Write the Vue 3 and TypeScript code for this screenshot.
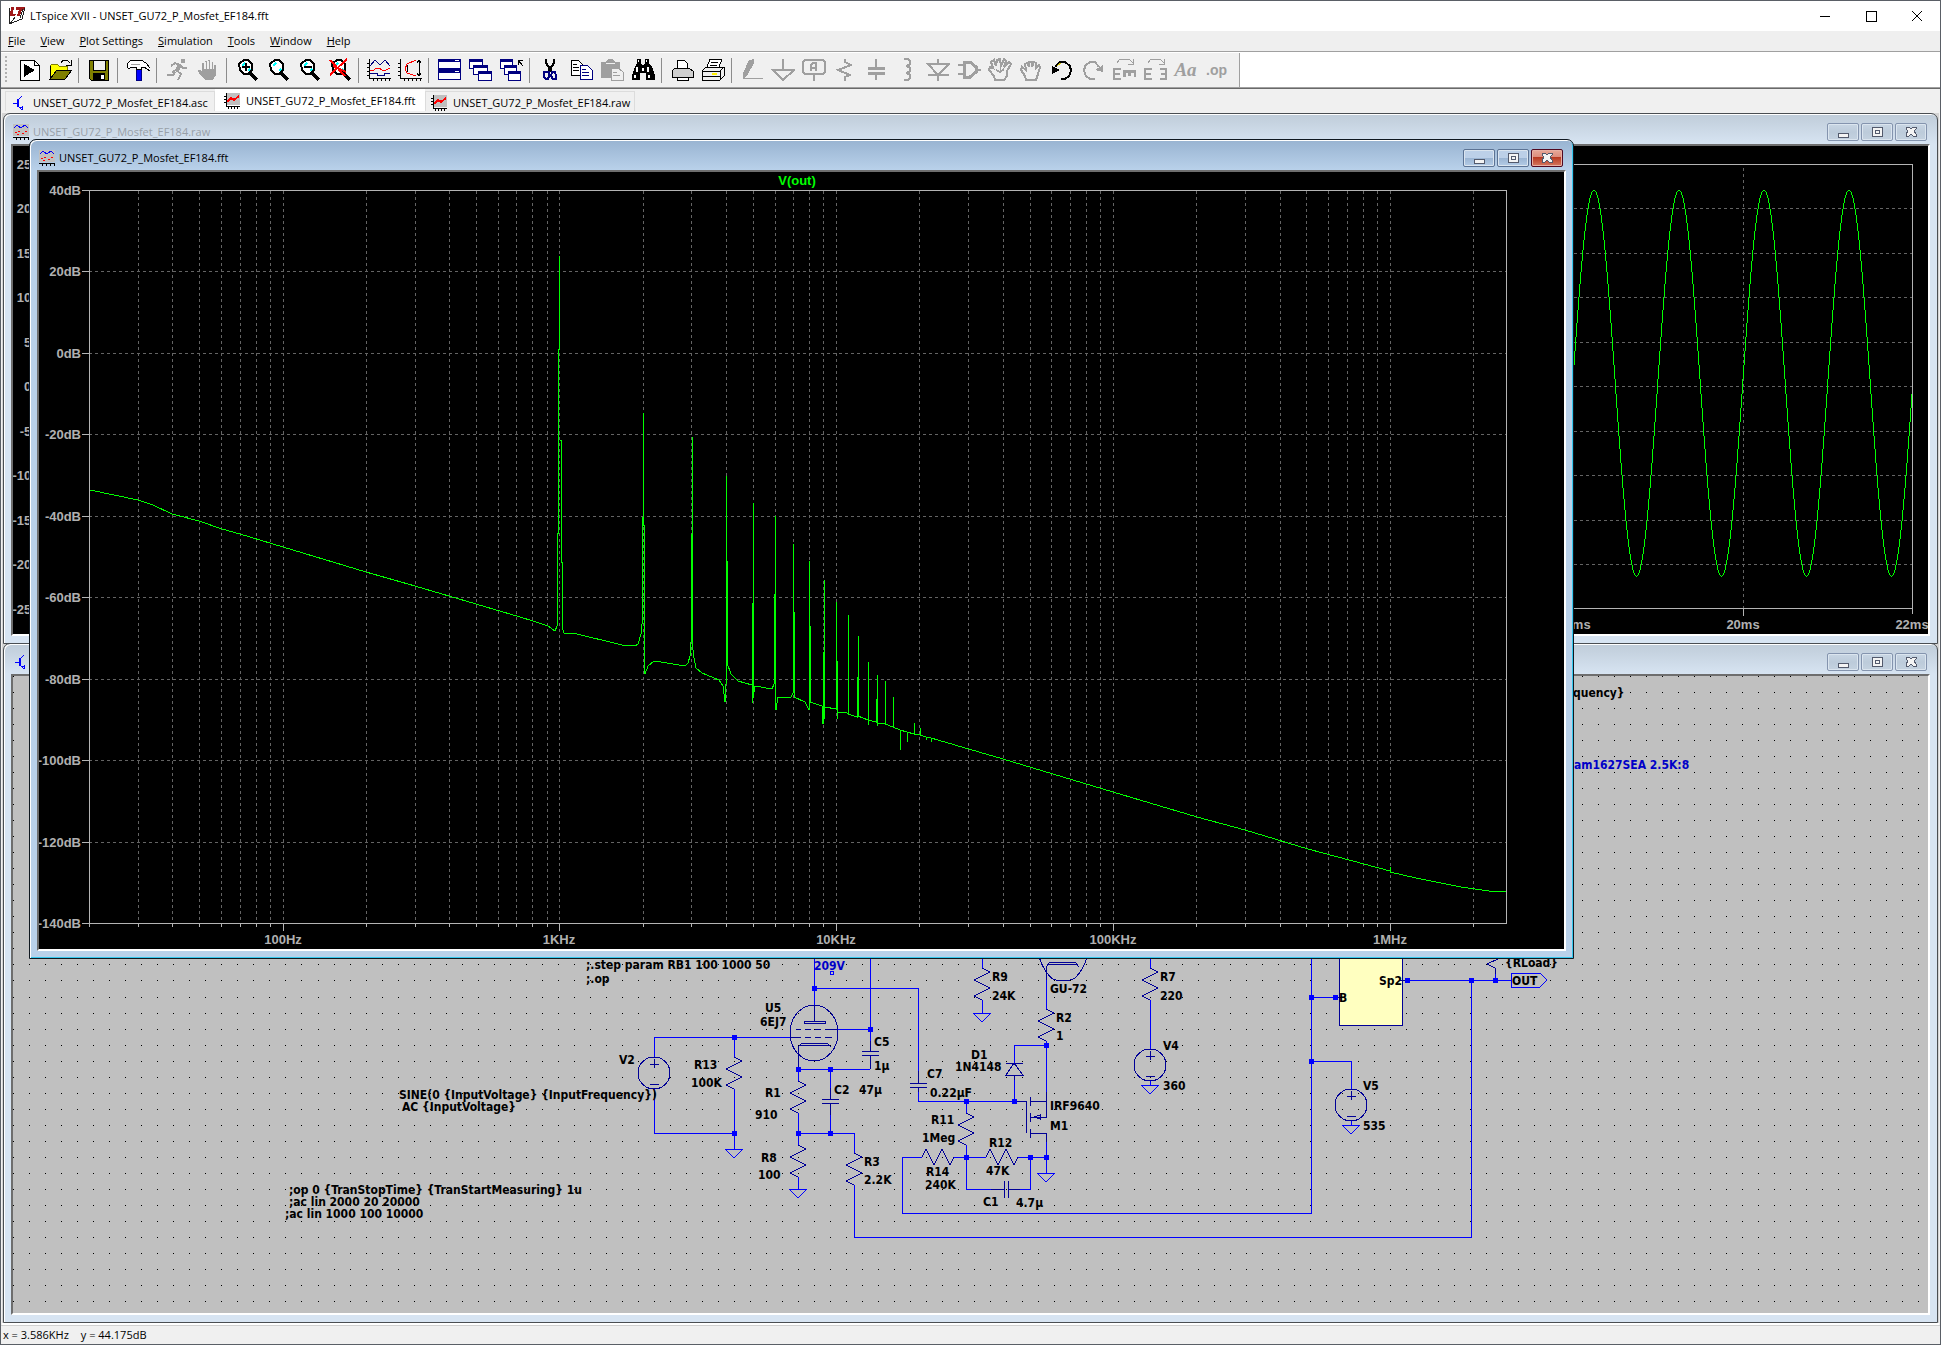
<script setup lang="ts">
type Pt = [number, number]
interface Shape { d: string; f?: string; s?: string; w?: number }
interface Tool { name: string; shapes: Shape[]; text?: string; serif?: boolean; off?: boolean }

const K = '#000000'
const G = '#9f9f9f'
const N = '#000080'
const GLASS: Shape[] = [
  { d: 'M15 15L22 22', s: K, w: 4 },
  { d: 'M9 2H13L17 6V12L13 16H9L5 12L4 6Z', f: '#ffffff', s: K, w: 2 },
  { d: 'M7 8L10 5M13 13L15 11', s: '#00ffff', w: 2 },
]

const groups: Tool[][] = [
  [
    { name: 'Run', shapes: [
      { d: 'M3 2H17L22 7V22H3Z', f: '#ffffff', s: K, w: 1 }, { d: 'M17 2V7H22', s: K }, { d: 'M7 6V19L18 12Z', f: K }] },
    { name: 'Open', shapes: [
      { d: 'M2 20V8L4 6H9L11 8H19V12H9L3 21Z', f: '#ffff00', s: '#808000' },
      { d: 'M9 12H24L17 21H2Z', f: '#808000', s: K }, { d: 'M2 8V21', s: K },
      { d: 'M13 5L15 2H19L22 5M23 2V7H18', s: K }] },
  ],
  [{ name: 'Save', shapes: [
    { d: 'M2 2H21V22H4L2 20Z', f: '#808000', s: K }, { d: 'M6 2H18V12H6Z', f: '#efefef', s: K },
    { d: 'M6 15H18V22H6Z', f: K }, { d: 'M14 17H17V21H14Z', f: '#ffffff' }] }],
  [{ name: 'Control Panel', shapes: [
    { d: 'M10 10H15V22H10Z', f: '#0000ff', s: N },
    { d: 'M1 6L5 2H15L20 5L24 10V13L18 9H15V11H10V9H5L3 11L1 9Z', f: '#ffffff', s: K },
    { d: 'M5 6H14', s: '#a0a0a0' }] }],
  [
    { name: 'Run simulation', off: true, shapes: [
      { d: 'M16 1H20V5H16Z', f: G }, { d: 'M15 6L11 12L7 14M6 8L10 5L15 7L18 10H22M11 12L16 16L13 22M10 14L8 17H2', s: G, w: 2 },
      { d: 'M13 6L17 8L13 14L10 12Z', f: G }] },
    { name: 'Halt', off: true, shapes: [
      { d: 'M6 12V5H8V11H9V3H11V11H12V2H14V11H15V4H17V11H18V7H20V17L17 22H9L3 15L2 12H4L6 14Z', f: G },
      { d: 'M9 4V11M12 3V11M15 4V11', s: '#efefef' }] },
  ],
  [
    { name: 'Zoom in', shapes: [...GLASS, { d: 'M7 9H15M11 5V13', s: K, w: 2 }] },
    { name: 'Zoom back', shapes: GLASS },
    { name: 'Zoom out', shapes: [...GLASS, { d: 'M7 9H15', s: K, w: 2 }] },
    { name: 'Zoom full extents', shapes: [...GLASS, { d: 'M2 2L17 18M19 1L2 17M5 8L18 14', s: '#ff0000', w: 2 }] },
  ],
  [
    { name: 'Autorange', shapes: [
      { d: 'M2 1V20H24M2 5H0M2 9H0M2 13H0M2 17H0M6 20V23M10 20V23M14 20V23M18 20V23M22 20V23', s: K },
      { d: 'M3 8L8 2L13 7L18 2L23 8', s: N }, { d: 'M3 12H7L9 10H12L15 12H19L23 10', s: '#ff0000' },
      { d: 'M3 15H10V17H17V15H23', s: N }] },
    { name: 'Y range', shapes: [
      { d: 'M2 1V20H24M2 5H0M2 9H0M2 13H0M2 17H0M6 20V23M10 20V23M14 20V23M18 20V23M22 20V23', s: K },
      { d: 'M18 2L9 6L7 11L9 15L18 18', s: '#ff0000', w: 1 }, { d: 'M21 2V18M19 5L21 2L23 5M19 15L21 18L23 15M9 7V14', s: K }] },
  ],
  [
    { name: 'Tile', shapes: [
      { d: 'M1 1H24V22H1Z', f: N }, { d: 'M2 4H23V10H2Z', f: '#ffffff' }, { d: 'M2 15H23V21H2Z', f: '#ffffff' },
      { d: 'M18 2H22', s: '#ffffff' }, { d: 'M18 13H22', s: '#ffffff' }] },
    { name: 'Cascade', shapes: [
      { d: 'M1 1H15V11H1Z', f: N }, { d: 'M2 4H14V10H2Z', f: '#ffffff' },
      { d: 'M5 7H20V17H5Z', f: N }, { d: 'M6 10H19V16H6Z', f: '#ffffff' },
      { d: 'M10 13H24V23H10Z', f: N }, { d: 'M11 16H23V22H11Z', f: '#ffffff' }] },
    { name: 'Close all', shapes: [
      { d: 'M1 1H14V11H1Z', f: N }, { d: 'M2 4H13V10H2Z', f: '#ffffff' },
      { d: 'M5 7H18V17H5Z', f: N }, { d: 'M6 10H17V16H6Z', f: '#ffffff' },
      { d: 'M9 13H22V23H9Z', f: N }, { d: 'M10 16H21V22H10Z', f: '#ffffff' },
      { d: 'M19 7V2H24M19 2L24 8', s: K }] },
  ],
  [
    { name: 'Cut', shapes: [
      { d: 'M8 1V5L14 14M16 1V5L10 14', s: K, w: 2 },
      { d: 'M9 14H6V19L8 21H10L11 18V14ZM14 14H17L18 18V21H15L13 18Z', s: N, w: 2 }] },
    { name: 'Copy', shapes: [
      { d: 'M2 2H9L13 6V17H2Z', f: '#ffffff', s: K }, { d: 'M4 6H8M4 9H10M4 12H10', s: K },
      { d: 'M11 7H18L23 12V21H11Z', f: '#ffffff', s: N }, { d: 'M13 11H17M13 14H20M13 17H20', s: N }] },
    { name: 'Paste', off: true, shapes: [
      { d: 'M1 4H6L8 1H13L15 4H20V20H1Z', f: G }, { d: 'M6 5H15', s: '#efefef' },
      { d: 'M11 10H18L23 14V22H11Z', f: '#efefef', s: G }, { d: 'M13 14H17M13 17H20', s: G }] },
    { name: 'Find', shapes: [
      { d: 'M6 1H10V5L12 8L14 5V1H18V5L21 9L24 17V22H15V15H9V22H1V17L4 9L6 5Z', f: K },
      { d: 'M7 3H8M15 3H16M6 9V14M12 10V13M17 9V14M4 17V20M18 17V20', s: '#ffffff', w: 2 }] },
  ],
  [
    { name: 'Print setup', shapes: [
      { d: 'M7 10V2H14L17 5V10', f: '#ffffff', s: K }, { d: 'M5 10H19L23 13V19H2V13Z', f: '#d0d0d0', s: K },
      { d: 'M7 19H18V22H7Z', f: '#ffffff', s: K }] },
    { name: 'Print', shapes: [
      { d: 'M6 9L9 1H21L18 9', f: '#ffffff', s: K }, { d: 'M10 4H17M9 7H16', s: K },
      { d: 'M1 13L5 9H23V18L19 22H1Z', f: '#efefef', s: K }, { d: 'M1 13H19V22M19 13L23 9M1 18H19', s: K },
      { d: 'M11 16H16', s: '#ffee00', w: 2 }] },
  ],
  [
    { name: 'Wire', off: true, shapes: [{ d: 'M9 2L14 1V5L8 16L3 21V15Z', f: G }, { d: 'M3 20H23', s: G }] },
    { name: 'Ground', off: true, shapes: [{ d: 'M12 1V12M2 12H23L12 22Z', s: G, w: 2 }] },
    { name: 'Label net', off: true, shapes: [{ d: 'M3 2H21L23 4V14L21 16H3L1 14V4ZM12 16V23M9 13V7L11 5H14V13M9 10H14', s: G, w: 2 }] },
    { name: 'Resistor', off: true, shapes: [{ d: 'M12 1V4L18 7L5 12L17 17L12 19V23', s: G, w: 2 }] },
    { name: 'Capacitor', off: true, shapes: [{ d: 'M12 1V10M12 14V22', s: G, w: 2 }, { d: 'M4 10H21M4 15H21', s: G, w: 3 }] },
    { name: 'Inductor', off: true, shapes: [{ d: 'M9 1H13L15 3V6L12 8L15 10V13L12 15L15 17V20L13 22H9', s: G, w: 2 }] },
    { name: 'Diode', off: true, shapes: [{ d: 'M12 1V6M2 6H23L12 17ZM2 17H23M12 17V23', s: G, w: 2 }] },
    { name: 'Component', off: true, shapes: [{ d: 'M1 7H6M1 16H6M19 12H24', s: G, w: 2 }, { d: 'M7 4H13L19 9V14L13 19H7Z', s: G, w: 3 }] },
    { name: 'Move', off: true, shapes: [{ d: 'M7 22L6 18L1 12L2 9L5 10L3 4L6 2L8 8L9 2L12 1L13 8L16 1L18 3L16 9L21 4L23 6L19 13V18L16 22ZM8 12L12 14L16 11', s: G, w: 2 }] },
    { name: 'Drag', off: true, shapes: [{ d: 'M7 22L6 18L2 12L3 9L7 12L6 6L8 5L10 9V4H13V9L15 4L17 5V10L20 7L21 9L19 16L17 22Z', s: G, w: 2 }] },
    { name: 'Undo', shapes: [{ d: 'M5 9L10 4H15L20 8L21 13L19 18L15 21H11', s: K, w: 2 }, { d: 'M7 8L11 5', s: '#d0c000' }, { d: 'M2 8V16L10 12Z', f: K }] },
    { name: 'Redo', off: true, shapes: [{ d: 'M18 9L14 4H9L4 8L3 13L5 18L9 21H14', s: G, w: 2 }, { d: 'M22 7V14L14 12Z', f: G }] },
    { name: 'Rotate', off: true, shapes: [{ d: 'M5 5L8 1H17L21 5M21 1V6H16', s: G, w: 1 }, { d: 'M9 11H2V21H9M2 16H8', s: G, w: 2 }, { d: 'M12 19V13H23V19M17 13V18', s: G, w: 3 }] },
    { name: 'Mirror', off: true, shapes: [{ d: 'M5 5L8 1H17L21 5M21 1V6H16', s: G, w: 1 }, { d: 'M9 11H2V21H9M2 16H8M17 11H23V21H17M18 16H23', s: G, w: 2 }] },
    { name: 'Text', off: true, shapes: [], text: 'Aa', serif: true },
    { name: 'SPICE directive', off: true, shapes: [], text: '.op' },
  ],
]

const menus = ['File', 'View', 'Plot Settings', 'Simulation', 'Tools', 'Window', 'Help']
const tabs = [
  { name: 'UNSET_GU72_P_Mosfet_EF184.asc', kind: 'asc' },
  { name: 'UNSET_GU72_P_Mosfet_EF184.fft', kind: 'plot' },
  { name: 'UNSET_GU72_P_Mosfet_EF184.raw', kind: 'plot' },
]

/* FFT plot: 20 Hz to 2.6 MHz on a log axis, 40 dB to -140 dB */
const freqX = (f: number) => Math.floor(283 + 276.8 * (Math.log10(f) - 2))
const dbY = (db: number) => Math.round(190 + (40 - db) * 733 / 180)
const dbs = [40, 20, 0, -20, -40, -60, -80, -100, -120, -140]
const minor: number[] = []
for (let dec = 10; dec <= 1e6; dec *= 10)
  for (let k = 1; k < 10; k++) {
    const f = k * dec
    if (f > 20 && f < 2.6e6) minor.push(f)
  }
const decades = [
  { f: 100, t: '100Hz' }, { f: 1e3, t: '1KHz' }, { f: 1e4, t: '10KHz' }, { f: 1e5, t: '100KHz' }, { f: 1e6, t: '1MHz' },
]
const trace: Pt[] = [
  [90, 490], [138, 500], [153, 505], [172, 514], [199, 521], [222, 529], [240, 534], [283, 547], [366, 572], [415, 586],
  [520, 617], [533, 621], [548, 626], [555, 631], [557, 626], [557, 533], [558, 533], [558, 349], [559, 349], [559, 256],
  [560, 318], [560, 440], [561, 440], [561, 562], [562, 562], [562, 626], [564, 633], [573, 633], [622, 645], [635, 646],
  [638, 644], [641, 634], [642, 624], [642, 517], [643, 517], [643, 413], [643, 525], [644, 525], [644, 654], [645, 674],
  [648, 666], [654, 661], [667, 663], [685, 666], [688, 663], [690, 656], [691, 642], [691, 534], [692, 534], [692, 437],
  [692, 642], [694, 658], [696, 668], [702, 673], [719, 680], [723, 686], [725, 702], [726, 684], [726, 476], [726, 561],
  [727, 561], [727, 663], [731, 674], [738, 681], [752, 685], [752, 703], [752, 603], [753, 603], [753, 503], [753, 698],
  [755, 686], [772, 689], [774, 684], [774, 594], [775, 594], [775, 516], [775, 702], [776, 710], [778, 697], [791, 697],
  [793, 693], [793, 544], [793, 612], [794, 612], [794, 697], [805, 702], [809, 710], [809, 561], [809, 626], [810, 626],
  [810, 702], [822, 706], [823, 724], [823, 652], [824, 652], [824, 580], [824, 719], [825, 707], [836, 709], [836, 602],
  [836, 661], [837, 661], [837, 719], [838, 712], [847, 713], [848, 714], [848, 615], [848, 714], [857, 717], [857, 677],
  [858, 677], [858, 636], [858, 716], [868, 720], [868, 662], [868, 725], [868, 720], [876, 722], [876, 699], [877, 699],
  [877, 675], [877, 726], [877, 723], [885, 724], [885, 681], [885, 724], [893, 727], [893, 697], [893, 727], [900, 730],
  [900, 750], [900, 730], [907, 732], [907, 742], [907, 732], [914, 734], [914, 723], [914, 734], [920, 735], [920, 728],
  [920, 735], [926, 737], [926, 740], [926, 737], [931, 738], [931, 742], [931, 738], [1003, 759], [1113, 792],
  [1197, 817], [1245, 830], [1308, 849], [1364, 864], [1390, 871], [1390, 867], [1390, 872], [1416, 878], [1461, 887],
  [1489, 891], [1506, 891],
]
const tracePts = trace.map(p => p.join(',')).join(' ')

/* Transient plot: 1 kHz sine, one period every 85 px */
const volts = [25, 20, 15, 10, 5, 0, -5, -10, -15, -20, -25]
const voltY = (v: number) => Math.round(386 - v * 89 / 10)
const sine: string[] = []
for (let x = 1500; x <= 1912; x++) sine.push(`${x},${Math.round(383 - 193 * Math.cos((x - 1594) * 2 * Math.PI / 85))}`)
const sinePts = sine.join(' ')

/* Schematic */
const dotRows: number[] = []
for (let i = 0; i < 40; i++) dotRows.push(676 + i * 16 + (i > 19 ? 1 : 0))

const resV: Pt[] = [[734, 1057], [798, 1081], [798, 1145], [854, 1153], [982, 968], [966, 1113], [1046, 1009], [1150, 968]]
const resH: Pt[] = [[922, 1157], [986, 1157]]
const grounds: Pt[] = [[734, 1149], [798, 1189], [982, 1013], [1046, 1173], [1150, 1085], [1351, 1125]]
const sources: Pt[] = [[654, 1073], [1150, 1065], [1351, 1105]]
const nodes: Pt[] = [
  [734, 1037], [734, 1133], [814, 988], [870, 1029], [798, 1069], [830, 1069], [798, 1133], [830, 1133], [966, 1101],
  [1014, 1101], [966, 1157], [1030, 1157], [1046, 1157], [1046, 1045], [1311, 997], [1335, 997], [1311, 1061],
  [1407, 980], [1471, 980], [1495, 980],
]
const wires = [
  'M654 1057V1037H790', 'M734 1037V1057M734 1089V1149', 'M654 1089V1133H734', 'M814 958V1005', 'M814 988H918V1071',
  'M870 958V1041M838 1029H870', 'M798 1069H870M798 1069V1081M798 1113V1145M798 1177V1189', 'M830 1069V1088M830 1115V1133',
  'M798 1133H854V1153M854 1185V1237H1471V980', 'M918 1092V1101H1014', 'M966 1101V1113M966 1145V1189H991M1020 1189H1030V1157',
  'M922 1157H902V1213H1311V958', 'M954 1157H986M1018 1157H1046', 'M1014 1063V1045H1046M1014 1080V1101',
  'M1046 980V1009M1046 1041V1092M1046 1142V1173', 'M982 958V968M982 1000V1013', 'M1150 958V968M1150 1000V1049',
  'M1311 1061H1351V1089M1311 997H1335M1407 980H1511M1495 980V974', 'M1511 973H1540L1547 980L1540 987H1511Z',
]
const parts = [
  'M814 1005V1021M804 1021H825V1023H804Z', 'M790 1037H801M805 1037H811M815 1037H821M825 1037H832',
  'M796 1029H801M805 1029H811M815 1029H821M825 1029H838', 'M798 1069V1047L802 1043H827L831 1047M800 1045H829',
  'M870 1041V1051M862 1051H879M862 1055H879M870 1055V1069', 'M830 1088V1099M822 1099H839M822 1103H839M830 1103V1115',
  'M918 1071V1083M910 1083H927M910 1087H927M918 1087V1092', 'M991 1189H1004M1004 1181V1198M1008 1181V1198M1008 1189H1020',
  'M1006 1063H1023M1014 1063L1006 1075H1023ZM1014 1075V1080',
  'M1014 1101H1026V1133M1030 1097V1106M1030 1113V1122M1030 1129V1138M1030 1101H1046M1046 1092V1117H1030M1030 1133H1046V1142',
  'M1034 1117L1040 1115V1119Z', 'M1039 955C1040 964 1050 980 1056 980H1070C1076 980 1086 966 1087 955',
  'M1046 980V967L1050 962H1075L1079 967M1048 964H1077', 'M1495 974V968L1487 964L1498 959',
  'M1335 997H1343M1399 980H1407',
]
const labels: [number, number, string][] = [
  [586, 969, ';.step param RB1 100 1000 50'], [586, 983, ';.op'], [765, 1012, 'U5'], [760, 1026, '6EJ7'],
  [874, 1046, 'C5'], [874, 1070, '1µ'], [619, 1064, 'V2'], [694, 1069, 'R13'], [691, 1087, '100K'], [765, 1097, 'R1'],
  [755, 1119, '910'], [834, 1094, 'C2'], [859, 1094, '47µ'], [927, 1078, 'C7'], [930, 1097, '0.22µF'],
  [931, 1124, 'R11'], [922, 1142, '1Meg'], [989, 1147, 'R12'], [986, 1175, '47K'], [926, 1176, 'R14'],
  [925, 1189, '240K'], [983, 1206, 'C1'], [1016, 1207, '4.7µ'], [761, 1162, 'R8'], [758, 1179, '100'],
  [864, 1166, 'R3'], [864, 1184, '2.2K'], [971, 1059, 'D1'], [955, 1071, '1N4148'], [992, 981, 'R9'], [992, 1000, '24K'],
  [1050, 993, 'GU-72'], [1056, 1022, 'R2'], [1056, 1040, '1'], [1160, 981, 'R7'], [1160, 1000, '220'],
  [1163, 1050, 'V4'], [1163, 1090, '360'], [1050, 1110, 'IRF9640'], [1050, 1130, 'M1'], [1363, 1090, 'V5'],
  [1363, 1130, '535'], [1505, 967, '{RLoad}'], [1512, 985, 'OUT'], [1339, 1002, 'B'], [1379, 985, 'Sp2'],
  [1573, 697, 'quency}'], [399, 1099, 'SINE(0 {InputVoltage} {InputFrequency})'], [402, 1111, 'AC {InputVoltage}'],
  [289, 1194, ';op 0 {TranStopTime} {TranStartMeasuring} 1u'], [289, 1206, ';ac lin 2000 20 20000'],
  [285, 1218, ';ac lin 1000 100 10000'],
]

const windows = [
  { id: 'raw', title: 'UNSET_GU72_P_Mosfet_EF184.raw' },
  { id: 'asc', title: '' },
  { id: 'fft', title: 'UNSET_GU72_P_Mosfet_EF184.fft' },
]
</script>

<template>
  <div class="app">
    <header class="titlebar">
      <svg class="logo" width="18" height="20" viewBox="0 0 18 20" aria-hidden="true">
        <path d="M1 2V18L14 13L17 1" fill="none" stroke="#222" />
        <path d="M3 1H6L5 8H8L7 10H2Z" fill="#a01818" />
        <path d="M8 1H17L16 4H14L12 10H9L11 4H8Z" fill="#a01818" />
        <path d="M2 18L7 11M12 12L15 3" stroke="#222" fill="none" />
      </svg>
      <span class="apptitle">LTspice XVII - UNSET_GU72_P_Mosfet_EF184.fft</span>
      <button class="sys" aria-label="Minimize"><svg width="10" height="10"><path d="M0 5H10" /></svg></button>
      <button class="sys" aria-label="Maximize"><svg width="10" height="10"><path d="M0 0H10V10H0Z" /></svg></button>
      <button class="sys" aria-label="Close"><svg width="10" height="10"><path d="M0 0L10 10M10 0L0 10" /></svg></button>
    </header>

    <nav class="menubar">
      <button v-for="m in menus" :key="m"><u>{{ m[0] }}</u>{{ m.slice(1) }}</button>
    </nav>

    <div class="toolrow">
      <div class="toolbar" role="toolbar">
        <i class="grip"></i>
        <template v-for="(g, gi) in groups" :key="gi">
          <i v-if="gi" class="sep"></i>
          <button v-for="t in g" :key="t.name" class="tool" :aria-label="t.name" :disabled="t.off">
            <span v-if="t.text" :class="['glyph', { serif: t.serif }]">{{ t.text }}</span>
            <svg v-else width="24" height="24" viewBox="0 0 24 24">
              <path v-for="(p, i) in t.shapes" :key="i" :d="p.d" :fill="p.f || 'none'" :stroke="p.s || 'none'" :stroke-width="p.w || 1" />
            </svg>
          </button>
        </template>
      </div>
    </div>

    <div class="tabs" role="tablist">
      <button v-for="(t, i) in tabs" :key="t.name" role="tab" :class="['tab', { active: i === 1 }]">
        <svg v-if="t.kind === 'asc'" width="16" height="16" viewBox="0 0 16 16">
          <path d="M2 8H6M6 4V12M6 6L11 1M6 10L11 15" stroke="#0000ff" fill="none" />
          <path d="M7 4V12M8 13L11 12V15" stroke="#0000ff" fill="none" />
        </svg>
        <svg v-else width="16" height="16" viewBox="0 0 16 16">
          <path d="M2 0H16V12H2Z" fill="#c0c0c0" />
          <path d="M2 0V13H16M0 3H2M0 6H2M0 9H2M4 13V16M7 13V16M10 13V16M13 13V16" stroke="#000" fill="none" />
          <path d="M3 9L7 5L10 7L15 3" stroke="#ff0000" fill="none" stroke-width="2" />
        </svg>
        <span>{{ t.name }}</span>
      </button>
    </div>

    <main class="mdi">
      <section v-for="w in windows" :key="w.id" :class="['win', w.id]">
        <div class="wtitle">
          <svg v-if="w.id === 'asc'" width="16" height="16" viewBox="0 0 16 16">
            <path d="M2 8H6M6 4V12M6 6L11 1M6 10L11 15M7 4V12M8 13L11 12V15" stroke="#0000ff" fill="none" />
          </svg>
          <svg v-else width="16" height="16" viewBox="0 0 16 16">
            <path d="M0 0H16V12H0Z" fill="#c0c0c0" />
            <path d="M1 4L4 1L8 4L12 1L15 4" stroke="#0000ff" fill="none" />
            <path d="M2 8H4M5 7H7M9 9H11M12 7H14M4 10H6" stroke="#ff0000" fill="none" />
            <path d="M0 13H16M3 13V16M7 13V16M11 13V16M15 13V16" stroke="#000" fill="none" />
          </svg>
          <span class="wname">{{ w.title }}</span>
          <button class="wbtn" aria-label="Minimize"><svg width="12" height="12"><path d="M1 7H11V11H1Z" /></svg></button>
          <button class="wbtn" aria-label="Maximize"><svg width="12" height="12"><path d="M1 1H11V10H1Z" /><path d="M4 4H8V7H4Z" /></svg></button>
          <button class="wbtn close" aria-label="Close">
            <svg width="12" height="12"><path d="M1 1H4L6 3L8 1H11V3L9 5L11 8V10H8L6 8L4 10H1V8L3 5L1 3Z" /></svg>
          </button>
        </div>

        <div class="client">
          <svg v-if="w.id === 'raw'" class="canvas">
            <g transform="translate(-13 -146)">
              <path v-for="v in volts.slice(1, -1)" :key="v" :d="`M1550 ${voltY(v)}H1912`" class="grid" />
              <path d="M1743 168V608" class="grid" />
              <path d="M60 164H1912V614M60 608H1912M1743 608V616" class="axis" />
              <polyline :points="sinePts" class="trace" />
              <text v-for="v in volts" :key="'t' + v" x="40" :y="voltY(v) + 5" class="tick end">{{ v }}V</text>
              <text x="1574" y="629" class="tick mid">18ms</text>
              <text x="1743" y="629" class="tick mid">20ms</text>
              <text x="1912" y="629" class="tick mid">22ms</text>
            </g>
          </svg>

          <svg v-else-if="w.id === 'fft'" class="canvas">
            <g transform="translate(-39 -172)">
              <path v-for="d in dbs.slice(1, -1)" :key="d" :d="`M89 ${dbY(d)}H1506`" class="grid" />
              <path v-for="f in minor" :key="f" :d="`M${freqX(f)} 191V923`" class="grid" />
              <path v-for="f in minor" :key="'k' + f" :d="`M${freqX(f)} 923v4`" class="axis" />
              <path v-for="d in decades" :key="'d' + d.f" :d="`M${freqX(d.f)} 923v8`" class="axis" />
              <path v-for="d in dbs" :key="'y' + d" :d="`M82 ${dbY(d)}H89`" class="axis" />
              <path d="M89 190H1506V923H89ZM89 923V927" class="axis" />
              <polyline :points="tracePts" class="trace" />
              <text v-for="d in dbs" :key="'l' + d" x="81" :y="dbY(d) + 5" class="tick end">{{ d }}dB</text>
              <text v-for="d in decades" :key="d.t" :x="freqX(d.f)" y="944" class="tick mid">{{ d.t }}</text>
              <text x="797" y="185" class="tick mid vout">V(out)</text>
            </g>
          </svg>

          <svg v-else class="canvas">
            <g transform="translate(-13 -676)">
              <g class="dots">
                <path v-for="y in dotRows" :key="y" :d="`M13 ${y}H310M318 ${y}H1928`" />
              </g>
              <g class="part">
                <path d="M1339 950H1402V1025H1339Z" class="block" />
                <path v-for="p in parts" :key="p" :d="p" />
                <ellipse cx="814" cy="1033" rx="24" ry="28" />
                <path v-for="([x, y], i) in resV" :key="'v' + i" :d="`M${x} ${y}l8 4l-16 8l16 8l-16 8l8 4`" />
                <path v-for="([x, y], i) in resH" :key="'h' + i" :d="`M${x} ${y}l4 -8l8 16l8 -16l8 16l4 -8`" />
                <g v-for="([x, y], i) in sources" :key="'s' + i">
                  <circle :cx="x" :cy="y" r="16" />
                  <path :d="`M${x - 4} ${y - 9}h9M${x} ${y - 14}v9M${x - 4} ${y + 11}h9`" />
                </g>
              </g>
              <g class="wire">
                <path v-for="p in wires" :key="p" :d="p" />
                <path v-for="([x, y], i) in grounds" :key="'g' + i" :d="`M${x - 9} ${y}h18l-9 9Z`" />
                <path d="M1150 1081V1085M1351 1121V1125" />
                <path d="M830 971H833V974H830Z" />
              </g>
              <rect v-for="([x, y], i) in nodes" :key="'n' + i" :x="x - 2" :y="y - 2" width="5" height="5" class="node" />
              <text v-for="([x, y, t], i) in labels" :key="'l' + i" :x="x" :y="y" class="label">{{ t }}</text>
              <text x="814" y="970" class="label blue">209V</text>
              <text x="1574" y="769" class="label blue">am1627SEA 2.5K:8</text>
            </g>
          </svg>
        </div>
      </section>
    </main>

    <footer class="status"><span>x = 3.586KHz</span><span>y = 44.175dB</span></footer>
  </div>
</template>

<style>
html, body { margin: 0; background: #3c5064; }
</style>

<style scoped>
.app {
  box-sizing: border-box;
  display: flex;
  flex-direction: column;
  height: 100vh;
  border: 1px solid #5a5f66;
  background: #f0f0f0;
  font: 11px/16px "Open Sans", "Noto Sans", sans-serif;
  color: #000;
  overflow: hidden;
}
button { font: inherit; color: inherit; background: none; border: 0; padding: 0; margin: 0; }
svg { display: block; flex: none; shape-rendering: crispEdges; }

.titlebar { display: flex; align-items: center; height: 30px; flex: none; background: #fff; }
.logo { margin: 0 4px 0 7px; }
.apptitle { flex: 1; padding-bottom: 1px; }
.sys { width: 46px; height: 30px; display: flex; align-items: center; justify-content: center; }
.sys svg { overflow: visible; }
.sys path { fill: none; stroke: #000; stroke-width: 1; }

.menubar { display: flex; height: 20px; flex: none; background: #efefef; border-bottom: 1px solid #a0a0a0; }
.menubar button { padding: 0 8px 0 7px; }

.toolrow {
  flex: none;
  height: 37px;
  box-sizing: border-box;
  background: #fff;
  padding-top: 1px;
  border-bottom: 1px solid #696969;
  box-shadow: inset 0 -1px 0 #a0a0a0;
}
.toolbar {
  box-sizing: border-box;
  display: flex;
  align-items: center;
  width: fit-content;
  height: 35px;
  padding: 0 7px 0 4px;
  background: #f0f0f0;
  border-right: 1px solid #a0a0a0;
  border-bottom: 1px solid #a0a0a0;
}
.grip { width: 2px; height: 28px; margin-right: 6px; background: repeating-linear-gradient(#b0b0b0 0 2px, transparent 2px 4px); }
.sep { width: 1px; height: 25px; margin: 0 4px 0 3px; background: #8c8c8c; }
.tool { width: 31px; height: 34px; display: flex; align-items: center; justify-content: center; color: #9f9f9f; }
.glyph { font: bold 14px/16px "Liberation Sans", sans-serif; }
.glyph.serif { font: italic bold 19px/20px "Liberation Serif", serif; }

.tabs { display: flex; align-items: flex-end; height: 24px; flex: none; padding: 0 0 2px 4px; box-sizing: border-box; background: #f0f0f0; }
.tab {
  box-sizing: border-box;
  display: flex;
  align-items: center;
  gap: 6px;
  width: 210px;
  height: 20px;
  padding: 2px 4px 0 5px;
  border: 1px solid #dcdcdc;
  border-bottom: 0;
  white-space: nowrap;
}
.tab.active { height: 22px; padding: 2px 2px 2px 8px; background: #fff; border-color: #fff; }

.mdi { position: relative; flex: 1; margin: 0 1px; background: #d4d4d4; overflow: hidden; border-bottom: 2px solid #fff; }
.win {
  position: absolute;
  box-sizing: border-box;
  display: flex;
  flex-direction: column;
  padding: 0 7px 7px;
  border: 1px solid #4a4e52;
  border-radius: 7px 7px 0 0;
  background: linear-gradient(#bfccd9, #d7e4f2 30px);
  box-shadow: inset 1px 1px 0 #fff;
}
.raw { left: 1px; right: 1px; top: 0; height: 531px; }
.asc { left: 1px; right: 1px; top: 530px; bottom: 0; }
.fft {
  left: 27px;
  top: 26px;
  width: 1545px;
  height: 820px;
  border-color: #101820;
  background: linear-gradient(#98b3d1, #b9d1ea 30px);
  box-shadow: inset 1px 1px 0 #fff, inset -1px -1px 0 #35c8ee;
}
.wtitle { display: flex; height: 30px; flex: none; box-sizing: border-box; padding: 6px 3px 0 2px; align-items: center; }
.wname { flex: 1; margin-left: 4px; }
.raw .wname { color: #98a0a8; }
.wbtn {
  box-sizing: border-box;
  width: 32px;
  height: 18px;
  margin-left: 2px;
  display: flex;
  align-items: center;
  justify-content: center;
  border: 1px solid #8494ae;
  border-radius: 2px;
  background: linear-gradient(#c8d6e4, #bccbda 50%, #c4d2e0);
  box-shadow: inset 0 0 0 1px #dbe5ef;
}
.fft .wbtn { border-color: #5c7394; background: linear-gradient(#bcd0e8 50%, #9ab4d2 50%, #b4cce6); }
.fft .close { border-color: #500820; background: linear-gradient(#e8a898, #dc8c7c 45%, #b83820 45%, #d47860); box-shadow: inset 0 0 0 1px #e8b0a4; }
.wbtn path { fill: #f4f4f4; stroke: #535a6c; }
.client {
  flex: 1;
  min-height: 0;
  border: 2px solid #fff;
  border-top-color: #6e6e6e;
  border-left-color: #6e6e6e;
  background: #000;
  overflow: hidden;
}
.asc .client { background: #c0c0c0; }
.canvas { width: 100%; height: 100%; }

.grid { fill: none; stroke: #646464; stroke-dasharray: 3 3; }
.axis { fill: none; stroke: #b4b4b4; }
.trace { fill: none; stroke: #00ff00; }
.tick { font: bold 13px "Liberation Sans", Arial, sans-serif; fill: #b0b0b0; }
.end { text-anchor: end; }
.mid { text-anchor: middle; }
.vout { fill: #00ff00; }

.dots path { stroke: #000; stroke-dasharray: 1 15; }
.wire path { fill: none; stroke: #0000ff; }
.part path, .part ellipse, .part circle { fill: none; stroke: #000096; }
.part .block { fill: #ffffc0; }
.node { fill: #0000ff; }
.label { font: bold 12px "DejaVu Sans Condensed", "Noto Sans", sans-serif; fill: #000; white-space: pre; }
.blue { fill: #0000c8; }

.status { display: flex; gap: 12px; align-items: center; height: 18px; flex: none; padding: 0 2px; border-top: 1px solid #d0d0d0; background: #f0f0f0; }
</style>
